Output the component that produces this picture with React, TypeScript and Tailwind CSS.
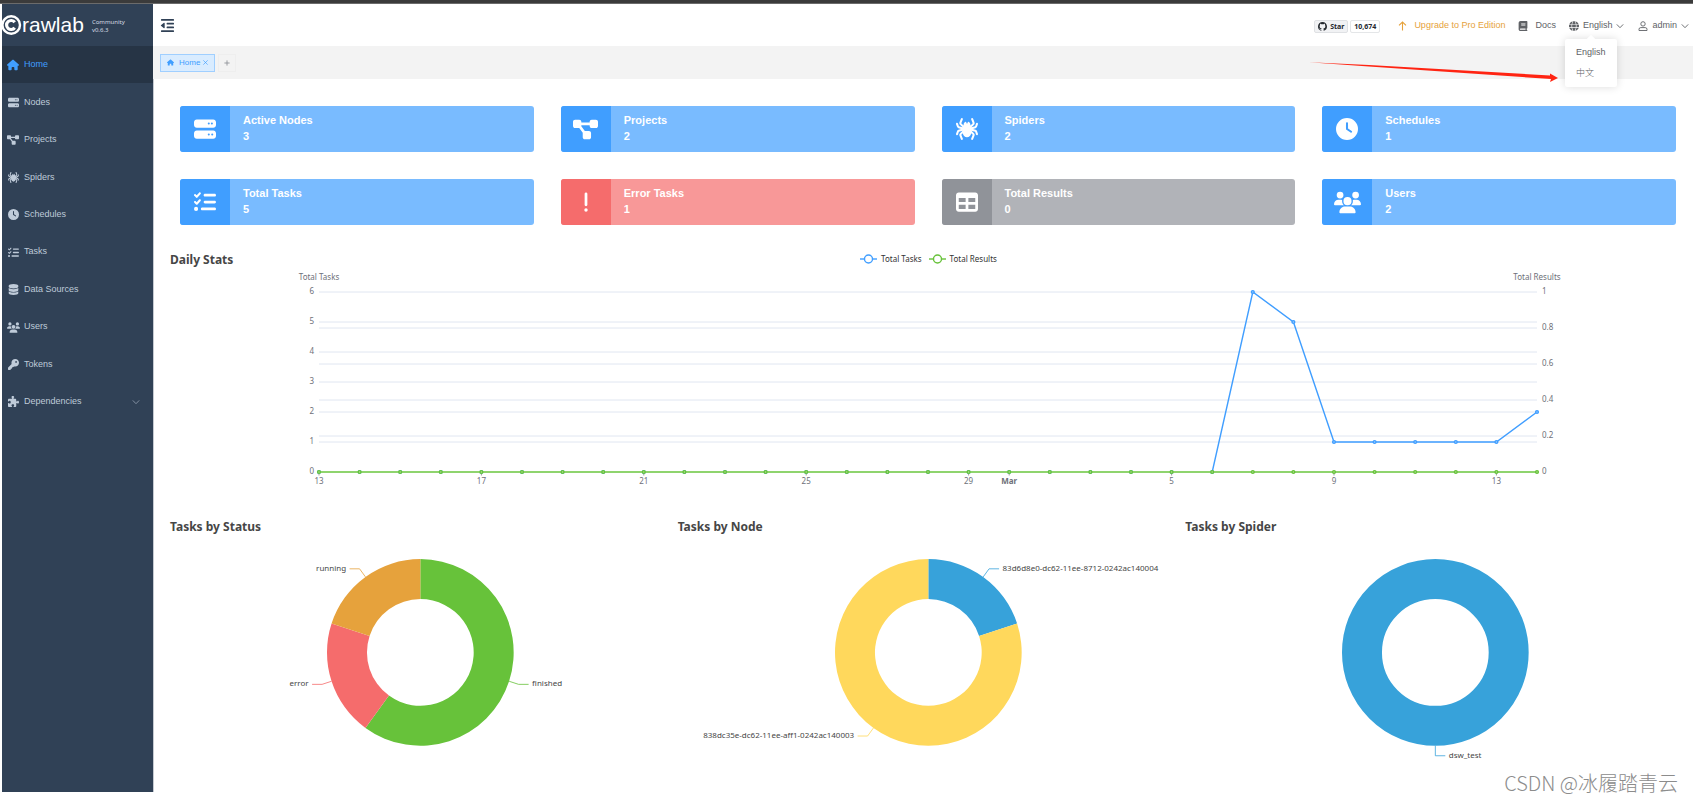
import React from "react";
import {
  FaBook,
  FaClock,
  FaDatabase,
  FaDiagramProject,
  FaExclamation,
  FaGlobe,
  FaHouse,
  FaKey,
  FaListCheck,
  FaOutdent,
  FaPuzzlePiece,
  FaServer,
  FaSpider,
  FaTable,
  FaUsers,
} from "react-icons/fa6";
import type { IconType } from "react-icons";

const SANS = "font-['Liberation_Sans','Noto_Sans_CJK_SC',sans-serif]";
const CHART = "font-['Noto_Sans',sans-serif]";

type NavItem = { label: string; icon: IconType; size?: string; active?: boolean; nested?: boolean };

const NAV: NavItem[] = [
  { label: "Home", icon: FaHouse, size: "size-3", active: true },
  { label: "Nodes", icon: FaServer },
  { label: "Projects", icon: FaDiagramProject, size: "size-3" },
  { label: "Spiders", icon: FaSpider },
  { label: "Schedules", icon: FaClock },
  { label: "Tasks", icon: FaListCheck },
  { label: "Data Sources", icon: FaDatabase },
  { label: "Users", icon: FaUsers, size: "size-[13px]" },
  { label: "Tokens", icon: FaKey },
  { label: "Dependencies", icon: FaPuzzlePiece, nested: true },
];

type Metric = { label: string; value: number; icon: IconType; size?: string; dark: string; light: string };

const BLUE = { dark: "bg-[#409eff]", light: "bg-[#79bbff]" };
const RED = { dark: "bg-[#f56c6c]", light: "bg-[#f89898]" };
const GRAY = { dark: "bg-[#909399]", light: "bg-[#b1b3b8]" };

const METRICS: Metric[] = [
  { label: "Active Nodes", value: 3, icon: FaServer, ...BLUE },
  { label: "Projects", value: 2, icon: FaDiagramProject, size: "size-[25px]", ...BLUE },
  { label: "Spiders", value: 2, icon: FaSpider, ...BLUE },
  { label: "Schedules", value: 1, icon: FaClock, ...BLUE },
  { label: "Total Tasks", value: 5, icon: FaListCheck, ...BLUE },
  { label: "Error Tasks", value: 1, icon: FaExclamation, ...RED },
  { label: "Total Results", value: 0, icon: FaTable, ...GRAY },
  { label: "Users", value: 2, icon: FaUsers, size: "size-[27px]", ...BLUE },
];

function Chevron({ className }: { className?: string }) {
  return (
    <svg viewBox="0 0 8 8" className={`size-2 ${className ?? ""}`} fill="none" stroke="currentColor" strokeWidth="0.9" aria-hidden="true">
      <path d="M0.8 2.4 4 5.7 7.2 2.4" />
    </svg>
  );
}

function GithubMark() {
  return (
    <svg viewBox="0 0 16 16" className="size-[9px]" fill="currentColor" aria-hidden="true">
      <path d="M8 0c4.42 0 8 3.58 8 8a8.013 8.013 0 0 1-5.45 7.59c-.4.08-.55-.17-.55-.38 0-.27.01-1.13.01-2.2 0-.75-.25-1.23-.54-1.48 1.78-.2 3.65-.88 3.65-3.95 0-.88-.31-1.59-.82-2.15.08-.2.36-1.02-.08-2.12 0 0-.67-.22-2.2.82-.64-.18-1.32-.27-2-.27-.68 0-1.36.09-2 .27-1.53-1.03-2.2-.82-2.2-.82-.44 1.1-.16 1.92-.08 2.12-.51.56-.82 1.28-.82 2.15 0 3.06 1.86 3.75 3.64 3.95-.23.2-.44.55-.51 1.07-.46.21-1.61.55-2.33-.66-.15-.24-.6-.83-1.23-.82-.67.01-.27.38.01.53.34.19.73.9.82 1.13.16.45.68 1.31 2.69.94 0 .67.01 1.3.01 1.49 0 .21-.15.45-.55.38A7.995 7.995 0 0 1 0 8c0-4.42 3.58-8 8-8Z" />
    </svg>
  );
}

function Logo() {
  return (
    <div className="flex h-[42px] items-center text-white">
      <svg viewBox="0 0 20 22" className="h-[22px] w-5 shrink-0" fill="none" stroke="currentColor" aria-hidden="true">
        <circle cx="9.2" cy="11" r="8.8" strokeWidth="2.4" />
        <path d="M12.7 8.3A4.5 4.5 0 1 0 12.7 13.7" strokeWidth="3.2" />
      </svg>
      <span className="text-[21px] leading-6">rawlab</span>
      <span className={`ml-2 pt-[2px] text-[6px] leading-[8px] text-[#d5dbe3] ${CHART}`}>
        Community
        <br />
        v0.6.3
      </span>
    </div>
  );
}

function Sidebar() {
  return (
    <aside className="flex w-[151px] shrink-0 flex-col bg-[#304156]">
      <Logo />
      <nav className="flex h-[374px] flex-col">
        {NAV.map(({ label, icon: Icon, size, active, nested }) => (
          <a
            key={label}
            href="#"
            className={`flex flex-1 items-center gap-[5px] pl-[5px] pt-px text-[9px] ${active ? "bg-[#263445] text-[#409eff]" : "text-[#bfcbd9]"}`}
          >
            <span className="flex w-3 justify-center">
              <Icon className={`shrink-0 ${size ?? "size-[11px]"}`} />
            </span>
            <span className="flex-1">{label}</span>
            {nested && <Chevron className="mr-[13px] text-[#8b99a9]" />}
          </a>
        ))}
      </nav>
    </aside>
  );
}

function Header() {
  return (
    <header className="flex h-[42px] items-center justify-between bg-white pl-[7px] pr-1 text-[9px] text-[#606266]">
      <button type="button" aria-label="Toggle sidebar" className="text-[#304156]">
        <FaOutdent className="size-[15px]" />
      </button>
      <div className="flex items-center pt-[2px]">
        <div className={`flex items-center gap-[2px] text-[7px] font-bold leading-[11px] text-[#24292f] ${CHART}`}>
          <a href="#" className="flex items-center gap-[3px] rounded-xs border border-[#dfe1e4] bg-[#f1f2f4] px-[3px]">
            <GithubMark />
            Star
          </a>
          <a href="#" className="rounded-xs border border-[#e4e6e8] bg-white px-[3px]">
            10,674
          </a>
        </div>
        <a href="#" className="ml-[18px] flex items-center gap-[7px] text-[#e6a23c]">
          <svg viewBox="0 0 9 10" className="h-[10px] w-[9px]" fill="none" stroke="currentColor" strokeWidth="1.1" aria-hidden="true">
            <path d="M4.5 9.5V1M1 4.4 4.5 1 8 4.4" />
          </svg>
          Upgrade to Pro Edition
        </a>
        <a href="#" className="ml-[13px] flex items-center gap-[7px]">
          <FaBook className="size-[10px]" />
          Docs
        </a>
        <div className="relative ml-[13px]">
          <button type="button" aria-haspopup="menu" aria-expanded="true" className="flex items-center gap-1">
            <FaGlobe className="size-[10px]" />
            English
            <Chevron />
          </button>
          <div role="menu" className="absolute left-[-4px] top-[20px] z-10 flex w-[52px] flex-col rounded-xs bg-white py-[3px] shadow-[0_0_8px_rgba(0,0,0,0.14)]">
            <span className="absolute left-[23px] top-[-3px] size-[6px] rotate-45 bg-white" />
            <button type="button" role="menuitem" className="h-[21px] pl-[11px] text-left">
              English
            </button>
            <button type="button" role="menuitem" className="h-[21px] pl-[11px] text-left font-light">
              中文
            </button>
          </div>
        </div>
        <button type="button" className="ml-[14px] flex items-center gap-1">
          <svg viewBox="0 0 10 10" className="size-[10px]" fill="none" stroke="currentColor" strokeWidth="0.9" aria-hidden="true">
            <circle cx="5" cy="2.9" r="2.2" />
            <path d="M1 9.5V8.3Q1 6.6 2.8 6.6H7.2Q9 6.6 9 8.3V9.5Z" />
          </svg>
          admin
          <Chevron />
        </button>
      </div>
    </header>
  );
}

function TabBar() {
  return (
    <div className="relative flex h-[33px] items-center gap-[3px] bg-[#f3f3f3] pl-[7px] text-[8px]">
      <div className="flex h-[18px] items-center gap-[5px] border border-[#a0cfff] bg-[#d9ecff] px-[6px] text-[#409eff]">
        <FaHouse className="size-[7px]" />
        <span>Home</span>
        <button type="button" aria-label="Close tab">
          <svg viewBox="0 0 6 6" className="-ml-[2px] size-[5px]" stroke="currentColor" strokeWidth="0.8" aria-hidden="true">
            <path d="M0.4 0.4 5.6 5.6M5.6 0.4 0.4 5.6" />
          </svg>
        </button>
      </div>
      <button type="button" aria-label="New tab" className="flex h-[18px] w-[18px] items-center justify-center border border-[#eeeeee] text-[#909399]">
        <svg viewBox="0 0 6 6" className="size-[6px]" stroke="currentColor" strokeWidth="0.9" aria-hidden="true">
          <path d="M3 0.4V5.6M0.4 3H5.6" />
        </svg>
      </button>
      <svg viewBox="0 0 250 22" className="absolute right-[134px] top-[14px] h-[22px] w-[250px]" aria-hidden="true">
        <path d="M0 2.3 60 5 241 15.4 241 13.6 249 18 241 22 242 19 60 6.4Z" fill="#ff2412" />
      </svg>
    </div>
  );
}

function MetricCard({ label, value, icon: Icon, size, dark, light }: Metric) {
  return (
    <a href="#" className={`flex h-[46px] overflow-hidden rounded-[3px] text-white ${light}`}>
      <span className={`flex w-[50px] items-center justify-center ${dark}`}>
        <Icon className={size ?? "size-[22px]"} />
      </span>
      <span className="flex flex-col pl-[13px] pt-[6px] text-[11px] font-bold leading-4">
        <span>{label}</span>
        <span>{value}</span>
      </span>
    </a>
  );
}

const TASKS = Array.from({ length: 31 }, (_, i) => {
  if (i === 23) return 6;
  if (i === 24) return 5;
  if (i >= 25 && i <= 29) return 1;
  return i === 30 ? 2 : 0;
});

const X_LABELS: [number, string][] = [
  [0, "13"],
  [4, "17"],
  [8, "21"],
  [12, "25"],
  [16, "29"],
  [17, "Mar"],
  [21, "5"],
  [25, "9"],
  [29, "13"],
];

const LEFT = 152;
const RIGHT = 1370;
const TOP = 22;
const BOTTOM = 202;
const xAt = (i: number) => LEFT + (i * (RIGHT - LEFT)) / 30;
const yAt = (ratio: number) => BOTTOM - ratio * (BOTTOM - TOP);

function LegendItem({ label, color }: { label: string; color: string }) {
  return (
    <span className="flex items-center gap-1">
      <svg viewBox="0 0 17 10" className="h-[10px] w-[17px]" fill="#fff" stroke={color} strokeWidth="1.4" aria-hidden="true">
        <path d="M0 5H17" />
        <circle cx="8.5" cy="5" r="4" />
      </svg>
      {label}
    </span>
  );
}

function DailyStats() {
  return (
    <section className={CHART}>
      <div className="grid h-[22px] grid-cols-3 items-center">
        <h2 className="pl-[3px] pt-[2px] text-[12px] font-bold leading-5 text-[#464646]">Daily Stats</h2>
        <div className="flex justify-center gap-[7px] text-[8px] text-[#333]">
          <LegendItem label="Total Tasks" color="#409eff" />
          <LegendItem label="Total Results" color="#67c23a" />
        </div>
      </div>
      <svg viewBox="0 0 1523 245" className="block w-full overflow-visible" fontSize="8" fill="#6e7079" role="img" aria-label="Daily stats">
        <g stroke="#e0e6f1" strokeWidth="1">
          {[1, 2, 3, 4, 5, 6].map((n) => (
            <path key={n} d={`M${LEFT} ${yAt(n / 6)}H${RIGHT}`} />
          ))}
          {[1, 2, 3, 4].map((n) => (
            <path key={n} d={`M${LEFT} ${yAt(n / 5)}H${RIGHT}`} />
          ))}
        </g>
        <text x={LEFT} y="10" textAnchor="middle">Total Tasks</text>
        <text x={RIGHT} y="10" textAnchor="middle">Total Results</text>
        {[0, 1, 2, 3, 4, 5, 6].map((n) => (
          <text key={n} x={LEFT - 5} y={yAt(n / 6) + 2} textAnchor="end">{n}</text>
        ))}
        {[0, 0.2, 0.4, 0.6, 0.8, 1].map((n) => (
          <text key={n} x={RIGHT + 5} y={yAt(n) + 2}>{n}</text>
        ))}
        {X_LABELS.map(([i, label]) => (
          <text key={i} x={xAt(i)} y="214" textAnchor="middle" fontWeight={label === "Mar" ? 700 : 400}>{label}</text>
        ))}
        <g stroke="#6e7079" strokeWidth="0.7">
          {X_LABELS.map(([i]) => (
            <path key={i} d={`M${xAt(i)} ${BOTTOM}v3.5`} />
          ))}
        </g>
        <g fill="#a0cfff" stroke="#409eff" strokeWidth="1.4">
          <polyline fill="none" points={TASKS.map((v, i) => `${xAt(i)},${yAt(v / 6)}`).join(" ")} />
          {TASKS.map((v, i) => (
            <circle key={i} cx={xAt(i)} cy={yAt(v / 6)} r="1.4" />
          ))}
        </g>
        <g fill="#b3e19d" stroke="#67c23a" strokeWidth="1.4">
          <path d={`M${LEFT} ${BOTTOM}H${RIGHT}`} stroke="#8fd46e" strokeWidth="1.9" />
          {TASKS.map((_, i) => (
            <circle key={i} cx={xAt(i)} cy={BOTTOM} r="1.4" />
          ))}
        </g>
      </svg>
    </section>
  );
}

type Slice = { name: string; share: number; color: string };

const CX = 253.5;
const CY = 113.5;
const OUTER = 93.4;
const INNER = 53.4;

function polar(r: number, turn: number) {
  const a = turn * 2 * Math.PI;
  return [CX + r * Math.sin(a), CY - r * Math.cos(a)];
}

function Donut({ title, slices }: { title: string; slices: Slice[] }) {
  let start = 0;
  return (
    <section className={CHART}>
      <h2 className="h-6 pl-[3px] text-[12px] font-bold leading-6 text-[#464646]">{title}</h2>
      <svg viewBox="0 0 508 253" className="block w-full" fontSize="8" role="img" aria-label={title}>
        {slices.map(({ name, share, color }) => {
          const from = start;
          const to = start + share;
          start = to;
          const mid = (from + to) / 2;
          const [ax, ay] = polar(OUTER, mid);
          const [bx, by] = polar(OUTER + 10, mid);
          const dir = mid > 0.5 ? -1 : 1;
          const [x0, y0] = polar(OUTER, from);
          const [x1, y1] = polar(OUTER, to);
          const [x2, y2] = polar(INNER, to);
          const [x3, y3] = polar(INNER, from);
          const large = share > 0.5 ? 1 : 0;
          return (
            <g key={name}>
              {share === 1 ? (
                <circle cx={CX} cy={CY} r={(OUTER + INNER) / 2} fill="none" stroke={color} strokeWidth={OUTER - INNER} />
              ) : (
                <path
                  fill={color}
                  d={`M${x0} ${y0}A${OUTER} ${OUTER} 0 ${large} 1 ${x1} ${y1}L${x2} ${y2}A${INNER} ${INNER} 0 ${large} 0 ${x3} ${y3}Z`}
                />
              )}
              <polyline points={`${ax},${ay} ${bx},${by} ${bx + dir * 10},${by}`} fill="none" stroke={color} strokeWidth="0.8" />
              <text x={bx + dir * 13.5} y={by + 2} textAnchor={dir < 0 ? "end" : "start"} fill="#464646">
                {name}
              </text>
            </g>
          );
        })}
      </svg>
    </section>
  );
}

export default function App() {
  return (
    <div className={`relative flex min-h-screen flex-col bg-white pb-[10px] ${SANS}`}>
      <div className="h-1 border-b border-[#6b6b6b] bg-[#3b3b3b]" />
      <div className="flex flex-1 pl-[2px]">
        <Sidebar />
        <div className="flex min-w-0 flex-1 flex-col">
          <Header />
          <TabBar />
          <main className="border-l border-[#c5cad1]">
            <div className="grid grid-cols-4 gap-[27px] pb-[23px] pl-[26px] pr-[17px] pt-[27px]">
              {METRICS.map((m) => (
                <MetricCard key={m.label} {...m} />
              ))}
            </div>
            <div className="pl-[13px] pr-[3px]">
              <DailyStats />
              <div className="grid grid-cols-3">
                <Donut
                  title="Tasks by Status"
                  slices={[
                    { name: "finished", share: 0.6, color: "#67c23a" },
                    { name: "error", share: 0.2, color: "#f56c6c" },
                    { name: "running", share: 0.2, color: "#e6a23c" },
                  ]}
                />
                <Donut
                  title="Tasks by Node"
                  slices={[
                    { name: "83d6d8e0-dc62-11ee-8712-0242ac140004", share: 0.2, color: "#37a2da" },
                    { name: "838dc35e-dc62-11ee-aff1-0242ac140003", share: 0.8, color: "#ffd85c" },
                  ]}
                />
                <Donut title="Tasks by Spider" slices={[{ name: "dsw_test", share: 1, color: "#37a2da" }]} />
              </div>
            </div>
          </main>
        </div>
      </div>
      <p className="absolute bottom-[5px] right-[15px] font-['Noto_Sans_CJK_SC',sans-serif] text-[20px] font-light leading-7 text-[#8c8c8c]">
        CSDN @冰履踏青云
      </p>
    </div>
  );
}
